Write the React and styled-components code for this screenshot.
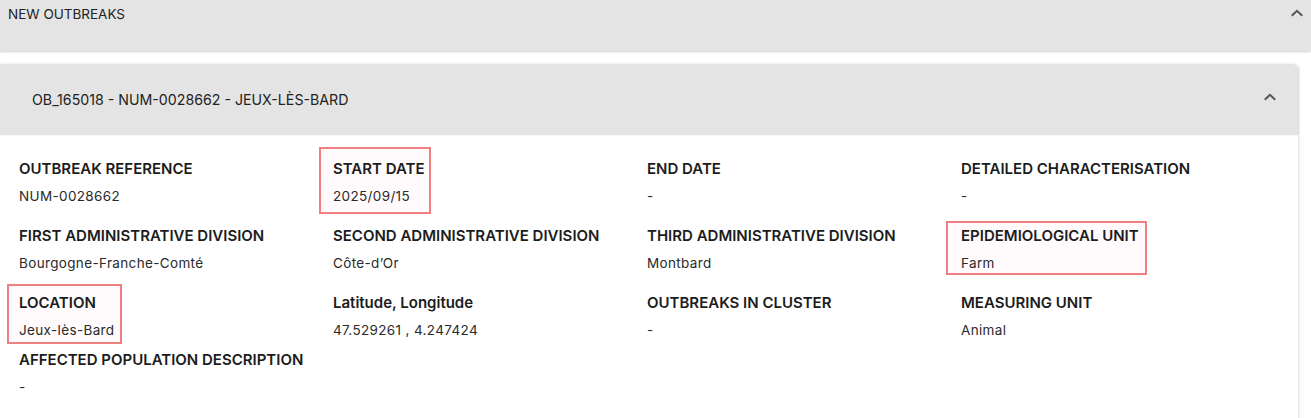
import React from "react";
import styled, { createGlobalStyle } from "styled-components";

const Global = createGlobalStyle`
  html, body { margin: 0; padding: 0; background: #ffffff; }
  body { font-family: "Inter", "Noto Sans", sans-serif; color: #222; overflow: hidden; }
  * { box-sizing: border-box; }
`;

const Page = styled.div`
  width: 1311px;
  height: 418px;
  overflow: hidden;
  background: #fff;
`;

const OuterHeader = styled.div`
  height: 51px;
  background: #e4e4e4;
  box-shadow: 0 1px 2px rgba(0, 0, 0, 0.18);
  display: flex;
  align-items: flex-start;
  justify-content: space-between;
  padding: 4px 7px 0 8px;
  position: relative;
`;

const HeaderTitle = styled.span`
  font-size: 13.5px;
  line-height: 20px;
  color: #222;
  text-transform: uppercase;
`;

const ChevronWrap = styled.span`
  display: inline-flex;
  width: 14px;
  height: 14px;
  margin-top: ${(p) => p.$top || 0}px;
  color: #555;
`;

const Card = styled.div`
  margin-top: 13px;
  width: 1298px;
  border-top-right-radius: 6px;
  background: #fff;
  box-shadow: 1px 0 3px rgba(0, 0, 0, 0.14);
  height: 400px;
`;

const CardHeader = styled.div`
  height: 70px;
  background: #e4e4e4;
  border-top-right-radius: 6px;
  box-shadow: 0 1px 2px rgba(0, 0, 0, 0.14);
  display: flex;
  align-items: center;
  justify-content: space-between;
  padding: 0 21px 0 32px;
`;

const CardTitle = styled.span`
  font-size: 14.2px;
  color: #222;
`;

const Body = styled.div`
  padding: 24px 0 0 19px;
`;

const Grid = styled.div`
  display: grid;
  grid-template-columns: repeat(4, 314px);
  row-gap: 19px;
  margin-bottom: 9px;
`;

const Field = styled.div`
  justify-self: start;
  display: flex;
  flex-direction: column;
  gap: 6px;
  ${(p) =>
    p.$hl
      ? `
    border: 2px solid #ef7f80;
    background: #fffafb;
    margin: -${p.$hl[0]}px -${p.$hl[1]}px -${p.$hl[2]}px -${p.$hl[3]}px;
    padding: ${p.$hl[0] - 2}px ${p.$hl[1] - 2}px ${p.$hl[2] - 2}px ${p.$hl[3] - 2}px;
  `
      : ""}
`;

const Label = styled.div`
  font-size: 15px;
  line-height: 22px;
  font-weight: 600;
  color: #1c1c1c;
  text-transform: ${(p) => (p.$plain ? "none" : "uppercase")};
  white-space: nowrap;
`;

const Value = styled.div`
  font-size: 13.5px;
  letter-spacing: 0.35px;
  line-height: 20px;
  color: #2a2a2a;
  white-space: nowrap;
`;

const Chevron = ({ top }) => (
  <ChevronWrap $top={top}>
    <svg width="14" height="14" viewBox="0 0 14 14" fill="none">
      <path d="M2.5 9 L7 4.8 L11.5 9" stroke="currentColor" strokeWidth="2" strokeLinecap="square" />
    </svg>
  </ChevronWrap>
);

const fields = [
  { label: "Outbreak reference", value: "NUM-0028662" },
  { label: "Start date", value: "2025/09/15", hl: [11, 6, 8, 14] },
  { label: "End date", value: "-" },
  { label: "Detailed characterisation", value: "-" },
  { label: "First administrative division", value: "Bourgogne-Franche-Comté" },
  { label: "Second administrative division", value: "Côte-d’Or" },
  { label: "Third administrative division", value: "Montbard" },
  { label: "Epidemiological unit", value: "Farm", hl: [4, 8, 2, 15] },
  { label: "Location", value: "Jeux-lès-Bard", hl: [8, 8, 4, 12] },
  { label: "Latitude, Longitude", value: "47.529261 , 4.247424", plain: true },
  { label: "Outbreaks in cluster", value: "-" },
  { label: "Measuring unit", value: "Animal" },
];

export default function App() {
  return (
    <Page>
      <Global />
      <OuterHeader>
        <HeaderTitle>New outbreaks</HeaderTitle>
        <Chevron top={2} />
      </OuterHeader>
      <Card>
        <CardHeader>
          <CardTitle>OB_165018 - NUM-0028662 - JEUX-LÈS-BARD</CardTitle>
          <Chevron top={-4} />
        </CardHeader>
        <Body>
          <Grid>
            {fields.map((f) => (
              <Field key={f.label} $hl={f.hl}>
                <Label $plain={f.plain}>{f.label}</Label>
                <Value>{f.value}</Value>
              </Field>
            ))}
          </Grid>
          <Field>
            <Label>Affected population description</Label>
            <Value>-</Value>
          </Field>
        </Body>
      </Card>
    </Page>
  );
}
